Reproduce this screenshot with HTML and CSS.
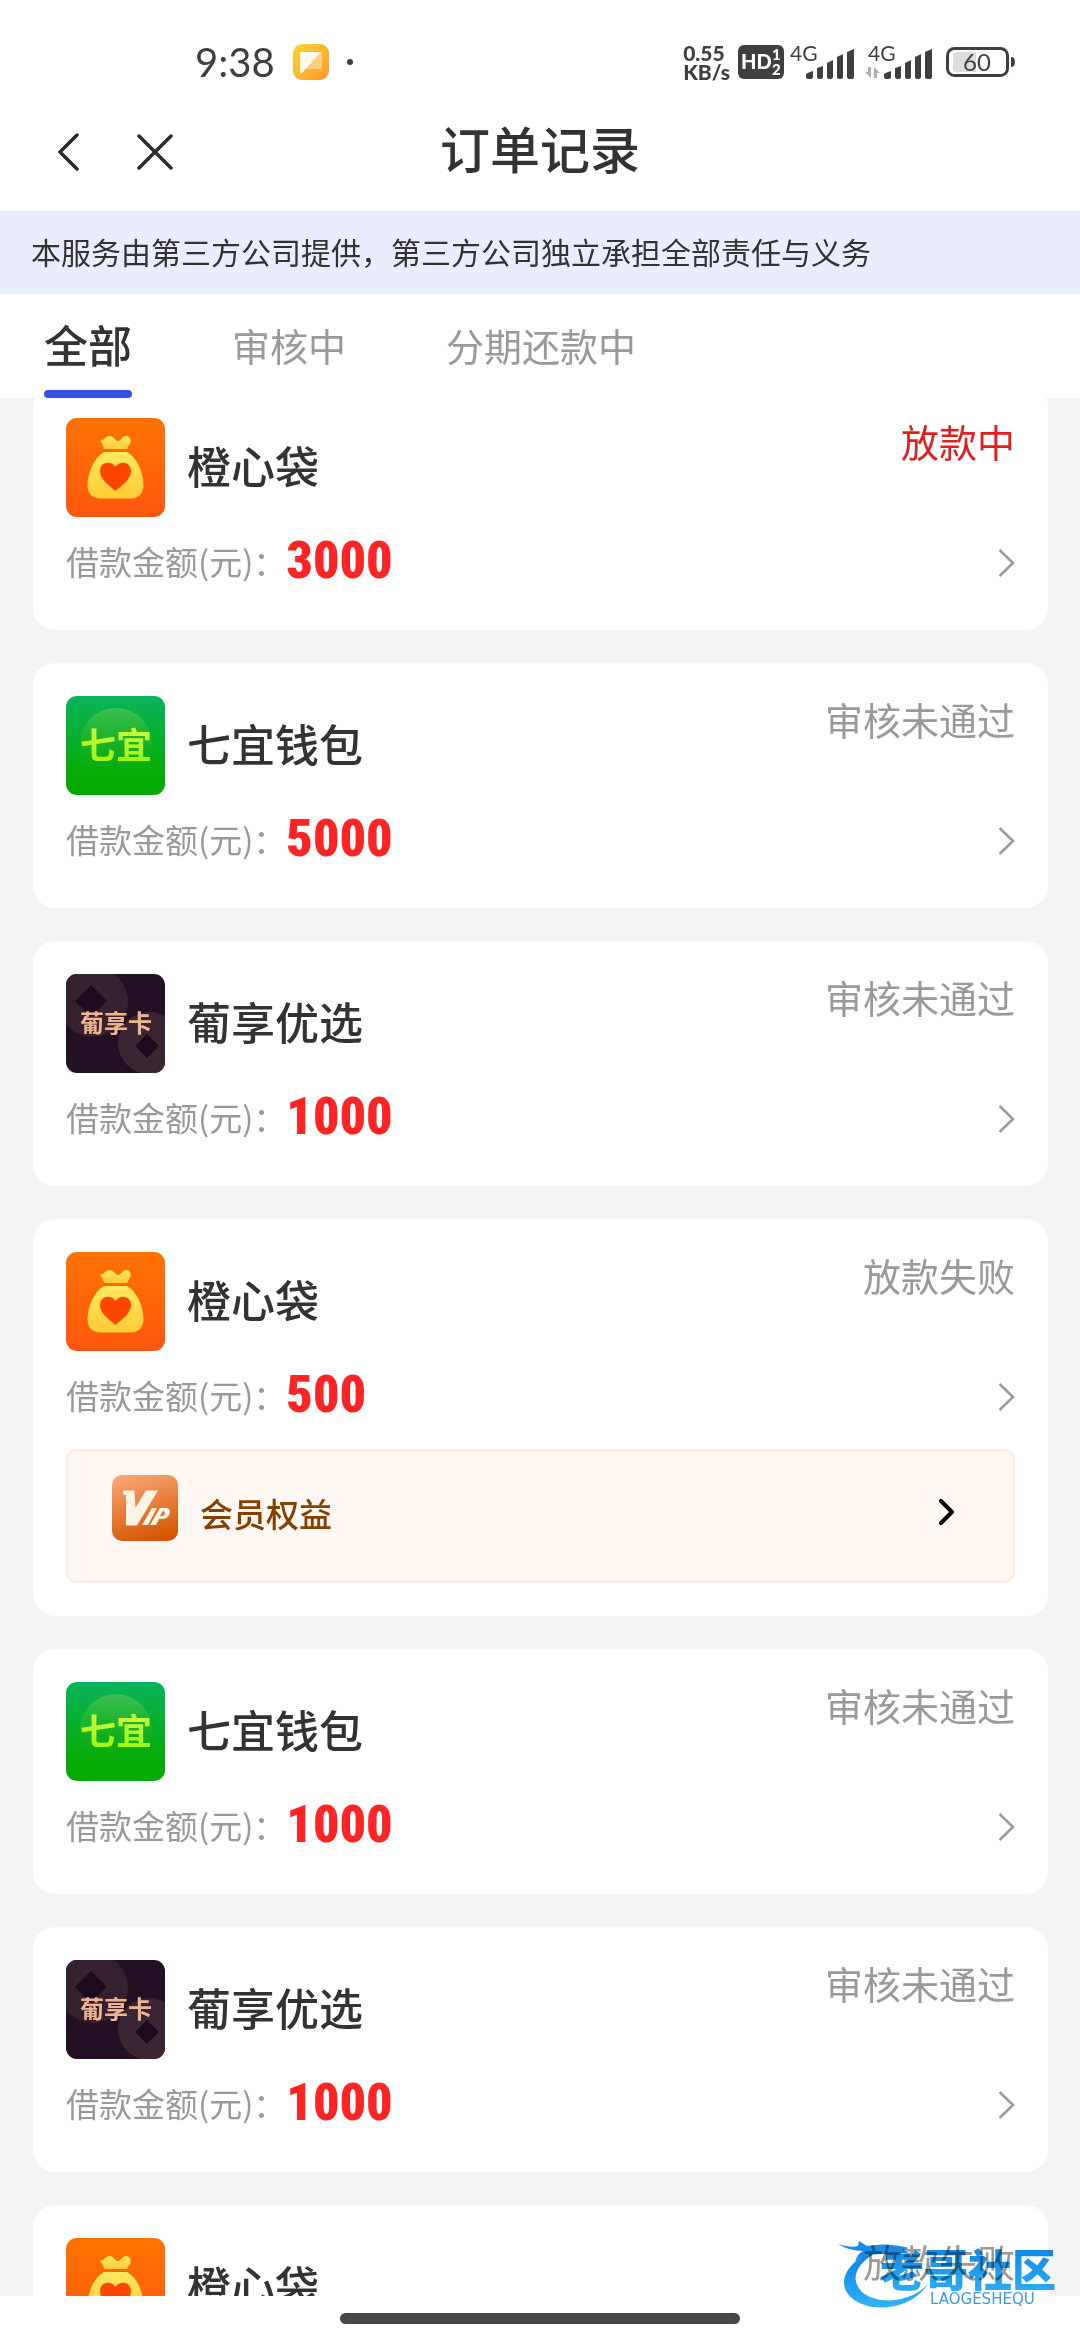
FILE: index.html
```html
<!DOCTYPE html>
<html lang="zh-CN">
<head>
<meta charset="utf-8">
<meta name="viewport" content="width=device-width, initial-scale=1">
<title>订单记录</title>
<link rel="stylesheet" href="styles.css">
</head>
<body>
<svg class="sprite" width="0" height="0" aria-hidden="true">
  <defs>
    <linearGradient id="g-orange" x1="0" y1="0" x2="0" y2="1"><stop offset="0" stop-color="#ff7400"/><stop offset="1" stop-color="#ff570f"/></linearGradient>
    <linearGradient id="g-gold" x1="0" y1="0" x2="0" y2="1"><stop offset="0" stop-color="#ffe95e"/><stop offset="1" stop-color="#ffcb35"/></linearGradient>
    <linearGradient id="g-green" x1="0" y1="0" x2="0" y2="1"><stop offset="0" stop-color="#08b45c"/><stop offset=".75" stop-color="#06ac08"/><stop offset="1" stop-color="#05a800"/></linearGradient>
    <linearGradient id="g-orb" x1="0" y1="0" x2="0" y2="1"><stop offset="0" stop-color="#3fbf50"/><stop offset=".7" stop-color="#12ae14" stop-opacity=".5"/><stop offset="1" stop-color="#06ac08" stop-opacity="0"/></linearGradient>
    <linearGradient id="g-lime" x1="0" y1="0" x2="0" y2="1"><stop offset="0" stop-color="#d8fb55"/><stop offset="1" stop-color="#96f800"/></linearGradient>
    <linearGradient id="g-vip" x1=".3" y1="0" x2=".6" y2="1"><stop offset="0" stop-color="#f7a471"/><stop offset="1" stop-color="#d65600"/></linearGradient>
    <linearGradient id="g-note" x1="0" y1="0" x2="1" y2="1"><stop offset="0" stop-color="#fcd535"/><stop offset="1" stop-color="#fb9a2b"/></linearGradient>
    <linearGradient id="g-blue" x1="0" y1="0" x2="0" y2="1"><stop offset="0" stop-color="#0c80e0"/><stop offset="1" stop-color="#2fb2fb"/></linearGradient>
    <clipPath id="tile"><rect width="99" height="99" rx="11"/></clipPath>
  </defs>
  <symbol id="logo-bag" viewBox="0 0 99 99">
    <rect width="99" height="99" rx="11" fill="url(#g-orange)"/>
    <path d="M34 23c3 0 5-4 9-5 4-1 6 5 9 5s4-5 8-5 6 4 4 8c-2 2-2 3-3 5H38c-1-4-2-6-4-8z" fill="url(#g-gold)"/>
    <path d="M38 34h23c9 5 16 18 16.500 33 0 9-5 13.500-13 13.500H35c-9 0-13.500-5-13.500-13.500C22 52 29 39 38 34z" fill="url(#g-gold)"/>
    <path d="M49.500 73C44 68 34 62 34 53c0-9 11-11 15.500-4C54 42 65 44 65 53c0 9-10 15-15.500 20z" fill="#ff4600"/>
  </symbol>
  <symbol id="logo-qiyi" viewBox="0 0 99 99">
    <rect width="99" height="99" rx="11" fill="url(#g-green)"/>
    <circle cx="50" cy="48" r="36" fill="url(#g-orb)"/>
  </symbol>
  <symbol id="logo-puxiang" viewBox="0 0 99 99">
    <g clip-path="url(#tile)">
      <rect width="99" height="99" fill="#231024"/>
      <circle cx="27" cy="28" r="35" fill="#35202f"/>
      <path d="M25 11l16 16-16 16L9 27z" fill="#1c0b1e"/>
      <circle cx="83" cy="69" r="31" fill="#3b2533"/>
      <path d="M81 60l12 12-12 12-12-12z" fill="#1c0b1e"/>
    </g>
  </symbol>
  <symbol id="chevron" viewBox="0 0 16 28"><path d="M0.500 1L14 14 0.500 27" fill="none" stroke="#999" stroke-width="2.500"/></symbol>
  <symbol id="bars" viewBox="0 0 48 31"><path d="M0 25q3-2 7-3v6q0 2-2 2H2q-2 0-2-2zM11 19l6-2v11q0 2-2 2h-2q-2 0-2-2zM21 14l6-3v17q0 2-2 2h-2q-2 0-2-2zM31 8l6-3v23q0 2-2 2h-2q-2 0-2-2zM41 3l7-3v28q0 2-2 2h-3q-2 0-2-2z" fill="#3f3f3f"/></symbol>
</svg>

<div class="app">
  <div class="statusbar">
    <div class="status-left">
      <span class="clock">9:38</span>
      <svg width="36" height="36" viewBox="0 0 36 36" aria-hidden="true"><rect width="36" height="36" rx="9" fill="url(#g-note)"/><path d="M9 8h18q2 0 2 2v13q0 2-2 2H12z" fill="#ffd998" opacity=".75"/><path d="M7 9q0-1 1-1h20L9 29q-2 1-2-1z" fill="#fffaf0"/></svg>
      <span class="dot"></span>
    </div>
    <div class="status-right">
      <span class="speed">0.55<br>KB/s</span>
      <svg width="46" height="34" viewBox="0 0 46 34" class="hd"><rect width="46" height="34" rx="6" fill="#3f3f3f"/><text x="3" y="24" class="hd-main">HD</text><text x="34" y="15" class="hd-sub">1</text><text x="34" y="30" class="hd-sub">2</text></svg>
      <svg width="64" height="36" viewBox="0 0 64 36" class="signal"><text x="0" y="17">4G</text><use href="#bars" x="16" y="5" width="48" height="31"/></svg>
      <svg width="68" height="36" viewBox="0 0 68 36" class="signal signal-two"><text x="3" y="17">4G</text><path d="M6 23v11L0 28h3v-5zM9 34V23l6 6h-3v5z" fill="#b0b0b0"/><use href="#bars" x="19" y="5" width="48" height="31"/></svg>
      <svg width="70" height="30" viewBox="0 0 70 30" class="battery"><rect x="1.500" y="1.500" width="60" height="27" rx="7" fill="none" stroke="#3f3f3f" stroke-width="3"/><path d="M10 5h20v20H10q-3 0-3-3V8q0-3 3-3z" fill="#ddd"/><path d="M65 10q4 0 4 5t-4 5z" fill="#3f3f3f"/><text x="31" y="24" text-anchor="middle">60</text></svg>
    </div>
  </div>

  <header class="navbar">
    <div class="nav-actions">
      <button type="button" aria-label="返回"><svg width="22" height="38" viewBox="0 0 22 38"><path d="M20 2L3 19l17 17" fill="none" stroke="#2b2b2b" stroke-width="3.500" stroke-linecap="round" stroke-linejoin="round"/></svg></button>
      <button type="button" aria-label="关闭"><svg width="36" height="36" viewBox="0 0 36 36"><path d="M2 2l32 32M34 2L2 34" fill="none" stroke="#2b2b2b" stroke-width="3.500" stroke-linecap="round"/></svg></button>
    </div>
    <h1>订单记录</h1>
  </header>

  <p class="notice">本服务由第三方公司提供，第三方公司独立承担全部责任与义务</p>

  <nav class="tabs">
    <button type="button" class="tab active">全部</button>
    <button type="button" class="tab">审核中</button>
    <button type="button" class="tab">分期还款中</button>
  </nav>

  <main class="orders">
    <ul class="order-list">
      <li class="card">
        <div class="card-head"><svg class="logo"><use href="#logo-bag"/></svg><h2>橙心袋</h2><span class="state paying">放款中</span></div>
        <a class="amount" href="#"><span class="label">借款金额(元)：</span><strong>3000</strong><svg class="go"><use href="#chevron"/></svg></a>
      </li>
      <li class="card">
        <div class="card-head"><svg class="logo qiyi" viewBox="0 0 99 99"><use href="#logo-qiyi"/><text x="14" y="63">七</text><text x="50" y="63">宜</text></svg><h2>七宜钱包</h2><span class="state">审核未通过</span></div>
        <a class="amount" href="#"><span class="label">借款金额(元)：</span><strong>5000</strong><svg class="go"><use href="#chevron"/></svg></a>
      </li>
      <li class="card">
        <div class="card-head"><svg class="logo puxiang" viewBox="0 0 99 99"><use href="#logo-puxiang"/><text x="14" y="58">葡</text><text x="38" y="58">享</text><text x="62" y="58">卡</text></svg><h2>葡享优选</h2><span class="state">审核未通过</span></div>
        <a class="amount" href="#"><span class="label">借款金额(元)：</span><strong>1000</strong><svg class="go"><use href="#chevron"/></svg></a>
      </li>
      <li class="card">
        <div class="card-head"><svg class="logo"><use href="#logo-bag"/></svg><h2>橙心袋</h2><span class="state">放款失败</span></div>
        <a class="amount" href="#"><span class="label">借款金额(元)：</span><strong>500</strong><svg class="go"><use href="#chevron"/></svg></a>
        <a class="vip" href="#">
          <svg class="vip-logo" viewBox="0 0 66 66" role="img" aria-label="VIP"><rect width="66" height="66" rx="10" fill="url(#g-vip)"/><path d="M11 15.500h11.500l1 17L34 15.500h12L25 50.500H14V20h-3z" fill="#fff3e6"/><path d="M40 33h5l-9 17h-6zM48 33h6c7 0 4 11-3 11h-4l-3 6h-6zM51 36l-3 5h2c3 0 4-5 1-5z" fill="#fff3e6" fill-rule="evenodd"/></svg>
          <span class="vip-name">会员权益</span>
          <svg class="vip-go" viewBox="0 0 16 26"><path d="M2 2l11 11L2 24" fill="none" stroke="#000" stroke-width="4" stroke-linecap="round" stroke-linejoin="round"/></svg>
        </a>
      </li>
      <li class="card">
        <div class="card-head"><svg class="logo qiyi" viewBox="0 0 99 99"><use href="#logo-qiyi"/><text x="14" y="63">七</text><text x="50" y="63">宜</text></svg><h2>七宜钱包</h2><span class="state">审核未通过</span></div>
        <a class="amount" href="#"><span class="label">借款金额(元)：</span><strong>1000</strong><svg class="go"><use href="#chevron"/></svg></a>
      </li>
      <li class="card">
        <div class="card-head"><svg class="logo puxiang" viewBox="0 0 99 99"><use href="#logo-puxiang"/><text x="14" y="58">葡</text><text x="38" y="58">享</text><text x="62" y="58">卡</text></svg><h2>葡享优选</h2><span class="state">审核未通过</span></div>
        <a class="amount" href="#"><span class="label">借款金额(元)：</span><strong>1000</strong><svg class="go"><use href="#chevron"/></svg></a>
      </li>
      <li class="card">
        <div class="card-head"><svg class="logo"><use href="#logo-bag"/></svg><h2>橙心袋</h2><span class="state">放款失败</span></div>
      </li>
    </ul>
  </main>

  <div class="home-area"><span class="home-bar"></span></div>

  <svg class="watermark" viewBox="0 0 226 76">
    <path d="M44 12C14 18-2 40 10 56c14 19 60 20 80-10-16 18-50 22-66 8C10 40 20 22 44 12z" fill="url(#g-blue)"/>
    <path d="M0 6q12 4 20 2l1-5 8 5q20-4 42 2l-6 2 8 4-12-1 8 7q-14-7-28-6-14 0-24 8 2-8 8-11-14 0-25-7z" fill="#178ce8"/>
    <text x="42" y="49" class="wm-name" fill="url(#g-blue)">老哥社区</text>
    <text x="92" y="66" class="wm-latin" fill="#3a9be8">LAOGESHEQU</text>
  </svg>
</div>
</body>
</html>
```
FILE: styles.css
```css
* { box-sizing: border-box; }

body {
  margin: 0;
  background: #fff;
  color: #333;
  font-family: "Noto Sans CJK SC", sans-serif;
}

h1, h2, p, ul { margin: 0; padding: 0; }
button { border: 0; padding: 0; background: none; font: inherit; color: inherit; }
a { color: inherit; text-decoration: none; }
svg { display: block; flex: none; }
.sprite { position: absolute; }

.app {
  position: relative;
  display: flex;
  flex-direction: column;
  height: 100vh;
  overflow: hidden;
}

/* system status bar */
.statusbar {
  display: flex;
  justify-content: space-between;
  align-items: center;
  height: 92px;
  padding: 32px 64px 0 195px;
  color: #3f3f3f;
  flex: none;
}
.status-left, .status-right { display: flex; align-items: center; }
.clock { font: 400 40px/48px Lato, sans-serif; margin-right: 18px; }
.dot { width: 6px; height: 6px; border-radius: 50%; background: #3f3f3f; margin-left: 18px; }
.speed { font: 900 21px/19px Lato, sans-serif; margin-right: 8px; }
.hd { margin-right: 6px; }
.hd text { fill: #fff; font-family: Lato, sans-serif; font-weight: 900; }
.hd-main { font-size: 20px; }
.hd-sub { font-size: 15px; }
.signal text { fill: #3f3f3f; font: 400 21px Lato, sans-serif; }
.signal-two { margin: 0 13px 0 11px; }
.battery text { fill: #3f3f3f; font: 400 24px Lato, sans-serif; }

/* page header */
.navbar {
  display: grid;
  grid-template-columns: 1fr auto 1fr;
  align-items: center;
  height: 119px;
  padding: 0 57px;
  flex: none;
}
.nav-actions { display: flex; align-items: center; gap: 58px; }
h1 { padding-bottom: 10px; font-size: 50px; font-weight: 500; line-height: 72px; }

.notice {
  padding: 0 31px 2px;
  background: #e9edfe;
  font-size: 30px;
  line-height: 81px;
  flex: none;
}

.tabs {
  display: flex;
  gap: 100px;
  height: 104px;
  padding: 0 44px;
  flex: none;
}
.tab { padding-top: 4px; font-size: 38px; color: #999; border-bottom: 8px solid transparent; }
.tab.active { position: relative; font-size: 44px; font-weight: 500; color: #333; }
.tab.active::after {
  content: "";
  position: absolute;
  left: 0;
  right: 0;
  bottom: -8px;
  height: 8px;
  border-radius: 4px;
  background: #3450e4;
}

/* order list, shown slightly scrolled */
.orders { flex: 1; min-height: 0; overflow: hidden; background: #f3f3f3; padding: 0 32px 0 33px; }
.order-list {
  display: flex;
  flex-direction: column;
  gap: 33px;
  margin-top: -13px;
  list-style: none;
}
.card { background: #fff; border-radius: 22px; padding: 33px; }
.card-head { display: flex; align-items: center; gap: 22px; }
.logo { width: 99px; height: 99px; }
h2 { padding-bottom: 6px; font-size: 44px; font-weight: 500; line-height: 64px; }
.state { margin-left: auto; align-self: flex-start; font-size: 38px; line-height: 46px; color: #999; }
.state.paying { color: #e02020; }
.amount { display: flex; align-items: center; height: 68px; margin-top: 12px; }
.label { padding-bottom: 4px; font-size: 33px; line-height: 48px; color: #999; }
.amount strong {
  padding-bottom: 4px;
  font: 900 52px/60px "Roboto Condensed", "Liberation Sans Narrow", Roboto, sans-serif;
  color: #fe2424;
}
.go { width: 16px; height: 28px; margin-left: auto; }

.vip {
  display: flex;
  align-items: center;
  height: 134px;
  margin-top: 18px;
  padding: 0 58px 16px 44px;
  border: 2px solid #fbebe2;
  border-radius: 11px;
  background: #fff7f2;
  color: #854000;
  font-size: 33px;
  font-weight: 500;
}
.vip-logo { width: 66px; height: 66px; margin-right: 22px; }
.vip-name { padding-top: 10px; }
.vip-go { width: 16px; height: 34px; padding-top: 8px; margin-left: auto; }

.home-area { display: flex; justify-content: center; align-items: center; height: 44px; flex: none; }
.home-bar { width: 37%; height: 11px; border-radius: 6px; background: #484848; }

/* community stamp over the bottom corner */
.watermark { position: absolute; right: 16px; bottom: 26px; width: 226px; height: 76px; mix-blend-mode: multiply; }
.wm-name { font: 900 44px "Noto Sans CJK SC", sans-serif; }
.wm-latin { font: 400 15px "DejaVu Sans", sans-serif; }

.qiyi text { fill: url(#g-lime); font: 700 36px "Noto Sans CJK SC", sans-serif; }
.puxiang text { fill: #eeb58f; font: 700 24px "Noto Sans CJK SC", sans-serif; }
```
